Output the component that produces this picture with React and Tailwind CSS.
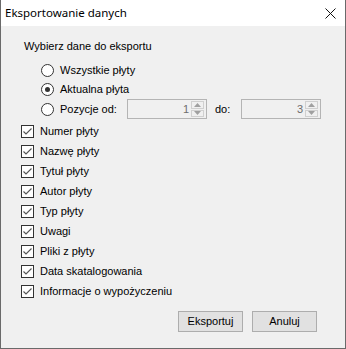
import React from 'react'

const font = { fontFamily: '"Liberation Sans", Arial, sans-serif' }

function Radio({ checked, label }) {
  return (
    <div className="h-[19px] flex items-center">
      <span className="w-[13px] h-[13px] rounded-full border border-[#333] bg-white flex items-center justify-center">
        {checked && <span className="w-[5px] h-[5px] rounded-full bg-[#333]" />}
      </span>
      <span className="ml-[6px]">{label}</span>
    </div>
  )
}

function Check({ label }) {
  return (
    <div className="h-[20px] flex items-center">
      <span className="w-[13px] h-[13px] border border-[#333] bg-white flex items-center justify-center">
        <svg width="11" height="11" viewBox="0 0 11 11">
          <path d="M1.5 5.5 L4 8 L9.5 2.5" fill="none" stroke="#555" strokeWidth="1.1" />
        </svg>
      </span>
      <span className="ml-[6px]">{label}</span>
    </div>
  )
}

function Spin({ value }) {
  return (
    <div className="w-[80px] h-[20px] border border-[#b4b4b4] bg-[#f0f0f0] flex items-center pr-[2px]">
      <span className="flex-1 text-right pr-[2px] text-[#6d6d6d]">{value}</span>
      <div className="w-[13px] h-[16px] flex flex-col gap-[1px]">
        <div className="flex-1 border border-[#d0d0d0] bg-[#f0f0f0] flex items-center justify-center">
          <svg width="7" height="4" viewBox="0 0 7 4"><path d="M0 4 L3.5 0 L7 4 Z" fill="#a0a0a0" /></svg>
        </div>
        <div className="flex-1 border border-[#d0d0d0] bg-[#f0f0f0] flex items-center justify-center">
          <svg width="7" height="4" viewBox="0 0 7 4"><path d="M0 0 L3.5 4 L7 0 Z" fill="#a0a0a0" /></svg>
        </div>
      </div>
    </div>
  )
}

const fields = [
  'Numer płyty',
  'Nazwę płyty',
  'Tytuł płyty',
  'Autor płyty',
  'Typ płyty',
  'Uwagi',
  'Pliki z płyty',
  'Data skatalogowania',
  'Informacje o wypożyczeniu',
]

export default function App() {
  return (
    <div className="w-[346px] h-[349px] flex flex-col border-x border-b border-[#6a6a6a] bg-[#f0f0f0] text-black" style={font}>
      <div className="h-[26px] shrink-0 bg-white flex items-center justify-between pl-[4px] pr-[9px]">
        <span className="text-[11.5px]" style={{ fontFamily: '"Noto Sans", sans-serif' }}>Eksportowanie danych</span>
        <svg width="11" height="11" viewBox="0 0 11 11">
          <path d="M0.5 0.5 L10.5 10.5 M10.5 0.5 L0.5 10.5" stroke="#111" strokeWidth="1" />
        </svg>
      </div>
      <div className="flex-1 flex flex-col pt-[14px] pl-[23px] text-[11px]">
        <div className="h-[13px] leading-[13px]">Wybierz dane do eksportu</div>
        <div className="pl-[17px] mt-[8px]">
          <Radio label="Wszystkie płyty" />
          <Radio checked label="Aktualna płyta" />
          <div className="flex items-center">
            <div className="w-[86px]"><Radio label="Pozycje od:" /></div>
            <Spin value="1" />
            <span className="ml-[8px] w-[26px]">do:</span>
            <Spin value="3" />
          </div>
        </div>
        <div className="-ml-[3px] mt-[2px]">
          {fields.map((f) => <Check key={f} label={f} />)}
        </div>
        <div className="flex justify-end gap-[9px] pr-[28px] mt-[10px]">
          <button className="w-[65px] h-[21px] border border-[#adadad] bg-[#e1e1e1]">Eksportuj</button>
          <button className="w-[65px] h-[21px] border border-[#adadad] bg-[#e1e1e1]">Anuluj</button>
        </div>
      </div>
    </div>
  )
}
